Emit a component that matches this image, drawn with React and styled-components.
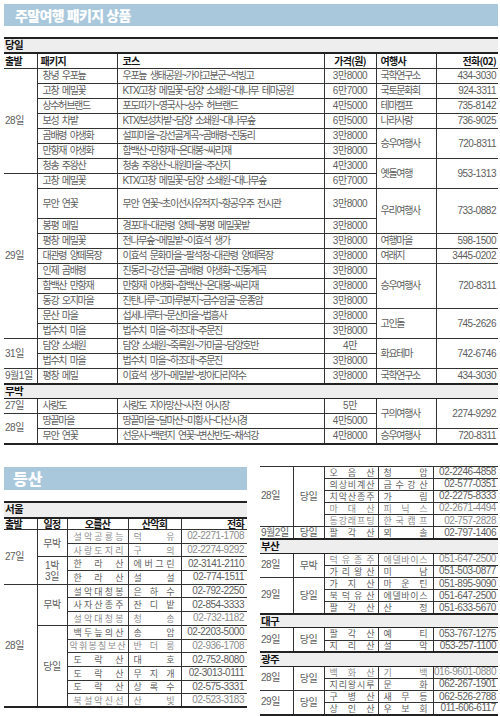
import React from "react";
import styled, { createGlobalStyle } from "styled-components";

const GlobalStyle = createGlobalStyle`
  html, body {
    margin: 0;
    padding: 0;
    background: #fff;
  }
  body {
    font-family: "Liberation Sans", "Noto Sans CJK KR", sans-serif;
    color: #5e5e5e;
  }
`;

const Page = styled.div`
  width: 500px;
  box-sizing: border-box;
  padding: 4px 2px 0 4px;
`;

const TitleBar = styled.div`
  height: ${(p) => p.$h}px;
  margin-top: ${(p) => p.$mt || 0}px;
  padding-left: ${(p) => p.$pl}px;
  display: flex;
  align-items: center;
  background: #a9c8dc;
  color: #fff;
  font-family: "Noto Sans CJK KR", sans-serif;
  font-weight: 900;
  font-size: ${(p) => p.$size}px;
  letter-spacing: ${(p) => p.$ls}px;
`;

const Sheet = styled.table`
  width: 100%;
  border-collapse: collapse;
  table-layout: fixed;
  font-size: 10px;
  line-height: 1;
  margin-top: ${(p) => p.$mt || 0}px;
  border-bottom: 2px solid #222;
  border-top: ${(p) => (p.$topLine ? "1px solid #333" : "none")};
`;

const Col = styled.col`
  width: ${(p) => p.$w}px;
`;

const Row = styled.tr`
  height: ${(p) => p.$h}px;
`;

const Cell = styled.td`
  border: 1px solid #333;
  padding: 0 ${(p) => p.$pr || 0}px 0 ${(p) => p.$pl || 0}px;
  text-align: ${(p) => p.$align || "left"};
  letter-spacing: ${(p) => (p.$num ? -0.45 : -1.3)}px;
  word-spacing: ${(p) => (p.$num ? 0 : 2)}px;
  color: ${(p) => (p.$light ? "#8c8c8c" : "#5e5e5e")};
  white-space: nowrap;
  overflow: hidden;
  ${(p) => p.$edge === "left" && "border-left: none;"}
  ${(p) => p.$edge === "right" && "border-right: none;"}
`;

const Head = styled.th`
  border: 1px solid #333;
  padding: 0 ${(p) => p.$pr || 0}px 0 ${(p) => p.$pl || 0}px;
  text-align: ${(p) => p.$align || "left"};
  font-family: "Noto Sans CJK KR", sans-serif;
  font-weight: 700;
  color: #151515;
  letter-spacing: -0.7px;
  white-space: nowrap;
  ${(p) => p.$edge === "left" && "border-left: none;"}
  ${(p) => p.$edge === "right" && "border-right: none;"}
`;

const Label = styled.td`
  background: #eeeeee;
  border-top: ${(p) => p.$top}px solid #222;
  border-bottom: ${(p) => p.$bottom}px solid #222;
  border-left: none;
  border-right: none;
  padding-left: 1px;
  font-family: "Noto Sans CJK KR", sans-serif;
  font-weight: 700;
  font-size: 10.5px;
  color: #111;
  letter-spacing: -0.6px;
`;

const SpreadBox = styled.div`
  display: flex;
  justify-content: space-between;
  padding: 0 ${(p) => p.$pr}px 0 ${(p) => p.$pl}px;
  font-family: "Noto Sans CJK KR", sans-serif;
  font-size: 9px;
  letter-spacing: 0;
`;

const PlanText = styled.span`
  display: block;
  line-height: 11px;
`;

const Lower = styled.div`
  display: grid;
  grid-template-columns: 243px 238px;
  column-gap: 13px;
  align-items: start;
  margin-top: 21px;
`;

const Column = styled.div`
  display: flex;
  flex-direction: column;
`;

function Spread({ text, pl, pr }) {
  const chars = [...text];
  const tight = chars.length >= 6;
  return (
    <SpreadBox $pl={tight ? 2 : pl} $pr={tight ? 2 : pr}>
      {chars.map((c, i) => (
        <span key={i}>{c}</span>
      ))}
    </SpreadBox>
  );
}

const dayTrips = [
  { date: "28일", dateSpan: 7, pkg: "창녕 우포늪", course: "우포늪 생태공원~가야고분군~석빙고", price: "3만8000", agency: "국학연구소", phone: "434-3030" },
  { pkg: "고창 메밀꽃", course: "KTX/고창 메밀꽃~담양 소쇄원~대나무 테마공원", price: "6만7000", agency: "국토문화회", phone: "924-3311" },
  { pkg: "상수허브랜드", course: "포도따기~영국사~상수 허브랜드", price: "4만5000", agency: "테마캠프", phone: "735-8142" },
  { pkg: "보성 차밭", course: "KTX/보성차밭~담양 소쇄원~대나무숲", price: "6만5000", agency: "나라사랑", phone: "736-9025" },
  { pkg: "곰배령 야생화", course: "설피마을~강선골계곡~곰배령~진동리", price: "3만8000", agency: "승우여행사", span: 2, phone: "720-8311" },
  { pkg: "만항재 야생화", course: "함백산~만항재~은대봉~싸리재", price: "3만8000" },
  { pkg: "청송 주왕산", course: "청송 주왕산~내원마을~주산지", price: "4만3000", agency: "옛돌여행", span: 2, phone: "953-1313" },
  { date: "29일", dateSpan: 10, pkg: "고창 메밀꽃", course: "KTX/고창 메밀꽃~담양 소쇄원~대나무숲", price: "6만7000" },
  { tall: true, pkg: "무안 연꽃", course: "무안 연꽃~초이선사유적지~항공우주 전시관", price: "3만8000", agency: "우리여행사", span: 2, phone: "733-0882" },
  { pkg: "봉평 메밀", course: "경포대~대관령 양떼~봉평 메밀꽃밭", price: "3만8000" },
  { pkg: "평창 메밀꽃", course: "전나무숲~메밀밭~이효석 생가", price: "3만8000", agency: "여행마을", phone: "598-1500" },
  { pkg: "대관령 양떼목장", course: "이효석 문화마을~팔석정~대관령 양떼목장", price: "3만8000", agency: "여래지", phone: "3445-0202" },
  { pkg: "인제 곰배령", course: "진동리~강선골~곰배령 야생화~진동계곡", price: "3만8000", agency: "승우여행사", span: 3, phone: "720-8311" },
  { pkg: "함백산 만항재", course: "만항재 야생화~함백산~은대봉~싸리재", price: "3만8000" },
  { pkg: "동강 오지마을", course: "진탄나루~고마루분지~금수암굴~운종암", price: "3만8000" },
  { pkg: "문산 마을", course: "섭세나루터~문산마을~법흥사", price: "3만8000", agency: "고인돌", span: 2, phone: "745-2626" },
  { pkg: "법수치 마을", course: "법수치 마을~하조대~주문진", price: "3만8000" },
  { date: "31일", dateSpan: 2, pkg: "담양 소쇄원", course: "담양 소쇄원~죽록원~가마골~담양호반", price: "4만", agency: "화요테마", span: 2, phone: "742-6746" },
  { pkg: "법수치 마을", course: "법수치 마을~하조대~주문진", price: "3만8000" },
  { date: "9월1일", dateSpan: 1, pkg: "평창 메밀", course: "이효석 생가~메밀밭~방아다리약수", price: "3만8000", agency: "국학연구소", phone: "434-3030" },
];

const nightTrips = [
  { date: "27일", dateSpan: 1, pkg: "사랑도", course: "사랑도 지아망산~사천 어시장", price: "5만", agency: "구의여행사", span: 2, phone: "2274-9292" },
  { date: "28일", dateSpan: 2, pkg: "땅끝마을", course: "땅끝마을~달마산~미황사~다산시경", price: "4만5000" },
  { pkg: "무안 연꽃", course: "선운사~백련지 연꽃~변산반도~채석강", price: "4만8000", agency: "승우여행사", phone: "720-8311" },
];

const seoul = [
  { date: "27일", dateSpan: 4, plan: "무박", planSpan: 2, mt: "설악공룡능", club: "덕유", tel: "02-2271-1708", light: true },
  { mt: "사랑도지리", club: "구의", tel: "02-2274-9292", light: true },
  { plan: "1박|3일", planSpan: 2, mt: "한라산", club: "에버그린", tel: "02-3141-2110" },
  { mt: "한라산", club: "설설", tel: "02-774-1511" },
  { date: "28일", dateSpan: 9, plan: "무박", planSpan: 3, mt: "설악대청봉", club: "은하수", tel: "02-792-2250" },
  { mt: "사자산종주", club: "잔디밭", tel: "02-854-3333" },
  { mt: "설악대청봉", club: "청송", tel: "02-732-1182", light: true },
  { plan: "당일", planSpan: 6, mt: "백두늪의산", club: "송암", tel: "02-2203-5000" },
  { mt: "악휘봉칠보산", club: "반더룽", tel: "02-936-1708", light: true },
  { mt: "도락산", club: "대호", tel: "02-752-8080" },
  { mt: "도락산", club: "무지개", tel: "02-3013-0111" },
  { mt: "도락산", club: "상록수", tel: "02-575-3331" },
  { mt: "북설악신선", club: "산빛", tel: "02-523-3183", light: true },
];

const regions = [
  { date: "28일", dateSpan: 5, plan: "당일", planSpan: 5, mt: "오음산", club: "청암", tel: "02-2246-4858" },
  { mt: "의상비계산", club: "금수강산", tel: "02-577-0351" },
  { mt: "치악산종주", club: "가림", tel: "02-2275-8333" },
  { mt: "마대산", club: "피닉스", tel: "02-2671-4494", light: true },
  { mt: "동강래프팅", club: "한국캠프", tel: "02-757-2828", light: true },
  { date: "9월2일", dateSpan: 1, plan: "당일", planSpan: 1, mt: "팔각산", club: "뫼솔", tel: "02-797-1406" },
  { label: "부산" },
  { date: "28일", dateSpan: 2, plan: "무박", planSpan: 2, mt: "덕유종주", club: "에델바이스", tel: "051-647-2500", light: true },
  { mt: "가리왕산", club: "미남", tel: "051-503-0877" },
  { date: "29일", dateSpan: 3, plan: "당일", planSpan: 3, mt: "가지산", club: "마운틴", tel: "051-895-9090" },
  { mt: "북덕유산", club: "에델바이스", tel: "051-647-2500" },
  { mt: "팔각산", club: "산정", tel: "051-633-5670" },
  { label: "대구" },
  { date: "29일", dateSpan: 2, plan: "당일", planSpan: 2, mt: "팔각산", club: "예티", tel: "053-767-1275" },
  { mt: "지리산", club: "설악", tel: "053-257-1100" },
  { label: "광주" },
  { date: "28일", dateSpan: 2, plan: "당일", planSpan: 2, mt: "백화산", club: "기백", tel: "016-9601-0880", light: true },
  { mt: "지리왕시루", club: "문화", tel: "062-267-1901" },
  { date: "29일", dateSpan: 2, plan: "당일", planSpan: 2, mt: "구병산", club: "새무등", tel: "062-526-2788" },
  { mt: "상인산", club: "우보회", tel: "011-606-6117" },
];

function TripRow({ r }) {
  return (
    <Row $h={r.tall ? 30 : 15}>
      {r.date && (
        <Cell rowSpan={r.dateSpan} $edge="left" $pl={1} $num>
          {r.date}
        </Cell>
      )}
      <Cell $pl={5}>{r.pkg}</Cell>
      <Cell $pl={5}>{r.course}</Cell>
      <Cell $align="center" $num>
        {r.price}
      </Cell>
      {r.agency && (
        <Cell rowSpan={r.span || 1} $pl={4}>
          {r.agency}
        </Cell>
      )}
      {r.phone && (
        <Cell rowSpan={r.span || 1} $edge="right" $align="right" $pr={2} $num>
          {r.phone}
        </Cell>
      )}
    </Row>
  );
}

function ClimbRow({ r, h, pad }) {
  if (r.label) {
    return (
      <Row $h={h}>
        <Label colSpan={5} $top={2} $bottom={1}>
          {r.label}
        </Label>
      </Row>
    );
  }
  return (
    <Row $h={h}>
      {r.date && (
        <Cell rowSpan={r.dateSpan} $edge="left" $pl={1} $num>
          {r.date}
        </Cell>
      )}
      {r.plan && (
        <Cell rowSpan={r.planSpan} $align="center" $num>
          {r.plan.split("|").map((t) => (
            <PlanText key={t}>{t}</PlanText>
          ))}
        </Cell>
      )}
      <Cell $light={r.light}>
        <Spread text={r.mt} pl={pad.mt[0]} pr={pad.mt[1]} />
      </Cell>
      <Cell $light={r.light}>
        <Spread text={r.club} pl={pad.club[0]} pr={pad.club[1]} />
      </Cell>
      <Cell $edge="right" $align="right" $pr={pad.tel} $num $light={r.light}>
        {r.tel}
      </Cell>
    </Row>
  );
}

export default function App() {
  return (
    <Page>
      <GlobalStyle />
      <TitleBar $h={22} $pl={11} $size={14} $ls={-0.6}>
        주말여행 패키지 상품
      </TitleBar>

      <Sheet $mt={11}>
        <colgroup>
          <Col $w={33} />
          <Col $w={80} />
          <Col $w={207} />
          <Col $w={52} />
          <Col $w={60} />
          <Col $w={62} />
        </colgroup>
        <tbody>
          <Row $h={12}>
            <Label colSpan={6} $top={2} $bottom={2}>
              당일
            </Label>
          </Row>
          <Row $h={16}>
            <Head $edge="left" $pl={1}>출발</Head>
            <Head $pl={3}>패키지</Head>
            <Head $pl={5}>코스</Head>
            <Head $align="center">가격(원)</Head>
            <Head $pl={4}>여행사</Head>
            <Head $edge="right" $align="right" $pr={2}>전화(02)</Head>
          </Row>
          {dayTrips.map((r, i) => (
            <TripRow key={i} r={r} />
          ))}
          <Row $h={15}>
            <Label colSpan={6} $top={2} $bottom={1}>
              무박
            </Label>
          </Row>
          {nightTrips.map((r, i) => (
            <TripRow key={i} r={r} />
          ))}
        </tbody>
      </Sheet>

      <Lower>
        <Column>
          <TitleBar $h={23} $mt={1} $pl={9} $size={16} $ls={0}>
            등산
          </TitleBar>
          <Sheet $mt={11}>
            <colgroup>
              <Col $w={33} />
              <Col $w={30} />
              <Col $w={61} />
              <Col $w={53} />
              <Col $w={66} />
            </colgroup>
            <tbody>
              <Row $h={16}>
                <Label colSpan={5} $top={2} $bottom={2}>
                  서울
                </Label>
              </Row>
              <Row $h={12}>
                <Head $edge="left" $pl={1}>출발</Head>
                <Head $align="center">일정</Head>
                <Head $align="center">오를산</Head>
                <Head $align="center">산악회</Head>
                <Head $edge="right" $align="right" $pr={3}>전화</Head>
              </Row>
              {seoul.map((r, i) => (
                <ClimbRow key={i} r={r} h={13.7} pad={{ mt: [6, 4], club: [5, 6], tel: 3 }} />
              ))}
            </tbody>
          </Sheet>
        </Column>

        <Column>
          <Sheet $topLine>
            <colgroup>
              <Col $w={33} />
              <Col $w={31} />
              <Col $w={54} />
              <Col $w={55} />
              <Col $w={65} />
            </colgroup>
            <tbody>
              {regions.map((r, i) => (
                <ClimbRow key={i} r={r} h={12.15} pad={{ mt: [5, 3], club: [5, 5], tel: 2 }} />
              ))}
            </tbody>
          </Sheet>
        </Column>
      </Lower>
    </Page>
  );
}
